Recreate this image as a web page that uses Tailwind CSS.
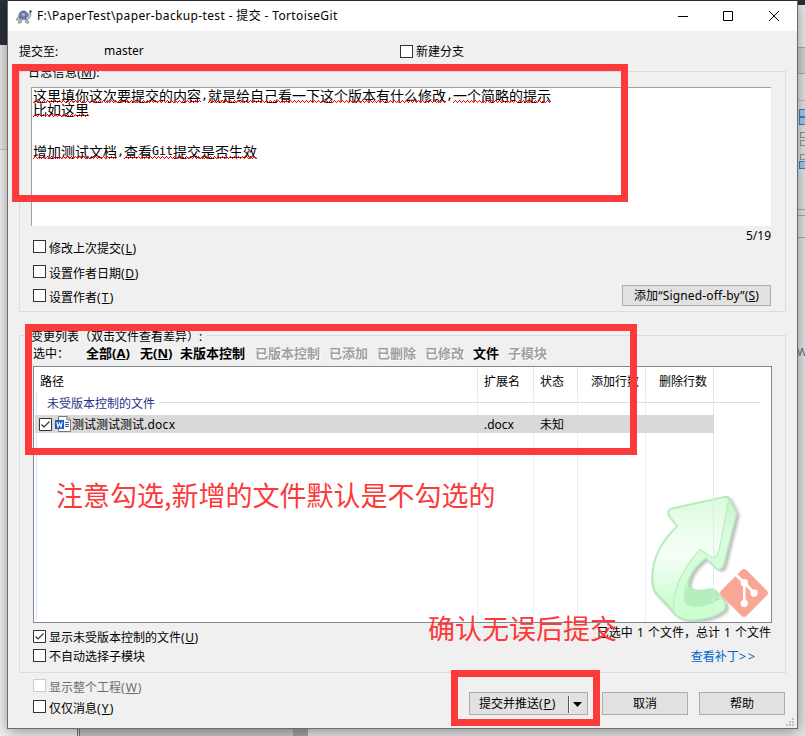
<!DOCTYPE html>
<html lang="zh-CN">
<head>
<meta charset="utf-8">
<title>TortoiseGit</title>
<script src="https://cdn.jsdelivr.net/npm/@tailwindcss/browser@4"></script>
</head>
<body class="relative h-[736px] w-[805px] overflow-hidden bg-[#e9e9e9] font-['Noto_Sans','Noto_Sans_CJK_SC',sans-serif] text-[12px] leading-[16px] text-black whitespace-nowrap">

<!-- spelling underline pattern -->
<svg class="absolute size-0"><defs><pattern id="wave" width="4" height="3" patternUnits="userSpaceOnUse"><path d="M0 2h1v1h-1zM1 1h1v1h-1zM2 0h1v1h-1zM3 1h1v1h-1z" fill="#f00"/></pattern></defs></svg>

<!-- desktop behind the dialog -->
<div class="absolute inset-0">
  <div class="absolute left-0 top-0 h-[45px] w-[10px] bg-[#2b303b]"></div>
  <div class="absolute left-0 top-[149px] h-px w-[8px] bg-[#c4c4c4]"></div>
  <div class="absolute left-0 top-[150px] h-[586px] w-[77px] bg-[#f3f3f3]"></div>
  <div class="absolute left-[77px] top-[728px] flex h-[8px] w-[231px] bg-[#c9c9c9]"><i class="w-[3px] border-x border-[#777] bg-[#ddd]"></i><i class="ml-auto w-[15px] bg-[#a8a8a8]"></i></div>
  <div class="absolute left-[797px] top-0 h-[736px] w-[8px] bg-[#e6e6e6]">
    <div class="h-[5px] bg-[#2b303b]"></div>
    <div class="h-[43px] border-b border-[#aaa] bg-[#ececec]"></div>
    <div class="h-[26px] border-b border-[#aaa] bg-[#d4d4d4]"></div>
    <div class="h-[27px] border-b border-[#bbb]"></div>
    <div class="mt-[8px] ml-[2px] h-[8px] border border-r-0 border-[#2f86d0] bg-[#a5cdec]"></div>
    <div class="ml-[2px] h-[8px] border border-r-0 border-[#2f86d0] bg-[#a5cdec]"></div>
    <div class="mt-[7px] ml-[3px] h-[6px] border border-r-0 border-[#999]"></div>
    <div class="mt-[2px] ml-[3px] h-[6px] border border-r-0 border-[#999]"></div>
    <div class="mt-[8px] ml-[3px] h-[6px] border border-r-0 border-[#999]"></div>
    <div class="mt-px ml-[2px] h-[8px] border border-r-0 border-[#2f86d0] bg-[#a5cdec]"></div>
    <div class="mt-[40px] h-[7px] border-y border-[#aaa]"></div>
    <div class="h-[22px] border-b border-[#aaa]"></div>
    <div class="mt-[106px] text-[11px] text-[#57709a]">W</div>
  </div>
</div>

<!-- commit dialog -->
<main class="relative ml-[7px] flex h-[729px] w-[791px] flex-col border border-[#6b6b6b] border-t-[#2b2b33] bg-[#f0f0f0] shadow-[0_3px_14px_rgba(0,0,0,0.4)]">
  <header class="flex h-[30px] items-center bg-white pl-[8px]">
    <svg class="h-[15px] w-[17px]" viewBox="0 0 17 15">
      <path d="M2 8L0 11L3 11M4 10L2 14H5L6 11M9 10L10 14H13L11 10" fill="#b9bec5" stroke="#777" stroke-width=".7"/>
      <path d="M3 9Q2 3 7 2Q12 2 12 8Q9 12 3 9Z" fill="#7890c0" stroke="#56617b"/>
      <path d="M5 5L7 3L10 5L9 8H6ZM3 8L6 8M9 8L12 8" fill="#9db1d8" stroke="#425a94" stroke-width=".8"/>
      <path d="M10 9Q13 7 13 4Q15 3 15 5Q15 9 11 11Z" fill="#c5c9cd" stroke="#777" stroke-width=".6"/>
      <path d="M13 2L15 1L16 3L14 4Z" fill="#245b6b"/>
    </svg>
    <h1 class="ml-[4px] text-[12px] tracking-[0.36px]">F:\PaperTest\paper-backup-test - 提交 - TortoiseGit</h1>
    <svg class="ml-auto mr-[17px] h-[12px] w-[102px]" viewBox="0 0 102 12" fill="none" stroke="#000">
      <path d="M0 6.5H10M45.5 1.5H54.5V10.5H45.5ZM91 1L101 11M101 1L91 11"/>
    </svg>
  </header>

  <div class="flex h-[40px] items-center pl-[11px]">
    <span class="w-[85px] pt-px">提交至:</span><span class="w-[296px]">master</span>
    <label class="flex items-center gap-[3px]"><i class="size-[13px] border border-[#333] bg-white"></i><span class="pt-px">新建分支</span></label>
  </div>

  <section class="relative ml-[11px] h-[241px] w-[767px] border border-[#dcdcdc] px-[11px] pt-[15px]">
    <div class="absolute left-[6px] top-[-7px] bg-[#f0f0f0] px-[2px] tracking-[0.3px]">日志信息(<u>M</u>):</div>
    <div class="h-[139px] w-[740px] border-l border-t border-[#a0a0a0] bg-white pl-[1px] font-['DejaVu_Sans_Mono','Noto_Sans_CJK_SC',monospace] text-[14px] leading-[15px]">
      <p class="flex h-[14px]"><span class="relative font-['Noto_Sans_CJK_SC']">这里填你这次要提交的内容<svg class="absolute left-0 top-[12px] h-[3px] w-full"><rect width="100%" height="3" fill="url(#wave)"/></svg></span><span class="text-[11.63px]">,</span><span class="relative font-['Noto_Sans_CJK_SC']">就是给自己看一下这个版本有什么修改<svg class="absolute left-0 top-[12px] h-[3px] w-full"><rect width="100%" height="3" fill="url(#wave)"/></svg></span><span class="text-[11.63px]">,</span><span class="relative font-['Noto_Sans_CJK_SC']">一个简略的提示<svg class="absolute left-0 top-[12px] h-[3px] w-full"><rect width="100%" height="3" fill="url(#wave)"/></svg></span></p>
      <p class="flex h-[42px]"><span class="relative font-['Noto_Sans_CJK_SC']">比如这里<svg class="absolute left-0 top-[12px] h-[3px] w-full"><rect width="100%" height="3" fill="url(#wave)"/></svg></span></p>
      <p class="flex h-[14px]"><span class="relative font-['Noto_Sans_CJK_SC']">增加测试文档<svg class="absolute left-0 top-[12px] h-[3px] w-full"><rect width="100%" height="3" fill="url(#wave)"/></svg></span><span class="text-[11.63px]">,</span><span class="relative flex"><span class="font-['Noto_Sans_CJK_SC']">查看</span><span class="text-[11.63px]">Git</span><span class="font-['Noto_Sans_CJK_SC']">提交是否生效</span><svg class="absolute left-0 top-[12px] h-[3px] w-full"><rect width="100%" height="3" fill="url(#wave)"/></svg></span></p>
    </div>
    <div class="flex w-[740px] justify-between">
      <div class="pl-[2px] pt-[12px]">
        <label class="flex h-[25px] items-start gap-[3px]"><i class="mt-[2px] size-[13px] border border-[#333] bg-white"></i><span class="mt-[3px]">修改上次提交<span class="tracking-[0.8px]">(<u>L</u>)</span></span></label>
        <label class="flex h-[24px] items-start gap-[3px]"><i class="mt-[2px] size-[13px] border border-[#333] bg-white"></i><span class="mt-[3px]">设置作者日期<span class="tracking-[0.7px]">(<u>D</u>)</span></span></label>
        <label class="flex h-[24px] items-start gap-[3px]"><i class="mt-[2px] size-[13px] border border-[#333] bg-white"></i><span class="mt-[3px]">设置作者<span class="tracking-[1.2px]">(<u>T</u>)</span></span></label>
      </div>
      <div class="flex flex-col items-end pt-[2px]">
        <span>5/19</span>
        <button class="mt-[41px] h-[21px] w-[149px] border border-[#adadad] bg-[#e1e1e1] leading-[18px] tracking-[0.15px]">添加“Signed-off-by”(<u>S</u>)</button>
      </div>
    </div>
  </section>

  <section class="relative ml-[11px] mt-[23px] h-[338px] w-[767px] border border-[#dcdcdc] pl-[13px] pt-[9px]">
    <div class="absolute left-[11px] top-[-7px] bg-[#f0f0f0] pr-[5px]">变更列表（双击文件查看差异）:</div>
    <div class="flex h-[21px] text-[13px] font-bold leading-[17px]">
      <span class="w-[53px] text-[12px] font-normal">选中：</span>
      <span class="w-[54px]">全部(<u>A</u>)</span><span class="w-[40px]">无(<u>N</u>)</span><span class="w-[75px]">未版本控制</span>
      <span class="w-[74px] text-[#a0a0a0] [text-shadow:1px_1px_#fff]">已版本控制</span><span class="w-[48px] text-[#a0a0a0] [text-shadow:1px_1px_#fff]">已添加</span><span class="w-[48px] text-[#a0a0a0] [text-shadow:1px_1px_#fff]">已删除</span><span class="w-[48px] text-[#a0a0a0] [text-shadow:1px_1px_#fff]">已修改</span>
      <span class="w-[35px]">文件</span><span class="text-[#a0a0a0] [text-shadow:1px_1px_#fff]">子模块</span>
    </div>
    <div class="relative h-[257px] w-[739px] border border-[#828790] bg-white">
      <div class="absolute bottom-[2px] left-[2px] top-[25px] w-px bg-[#cce4ff]"></div>
      <svg class="absolute left-[612px] top-[124px] h-[131px] w-[126px]" viewBox="18 15 378 393">
        <defs>
          <linearGradient id="arrowBody" x1="0" y1="0" x2="0" y2="1"><stop offset="0" stop-color="#dcfbde"/><stop offset=".5" stop-color="#f6fff7"/><stop offset=".72" stop-color="#e2fde4"/><stop offset="1" stop-color="#c6ffca"/></linearGradient>
          <linearGradient id="arrowSide" x1="0" y1="0" x2="0" y2="1"><stop offset="0" stop-color="#c4f5c9"/><stop offset=".3" stop-color="#dcfbdf"/><stop offset="1" stop-color="#cbffcf"/></linearGradient>
          <filter id="soft"><feGaussianBlur stdDeviation="4"/></filter>
        </defs>
        <path d="M86 72Q81 82 89 93L111 120Q38 190 36 273Q35 300 45 320L105 386Q125 403 155 403Q215 402 252 374Q260 365 254 345L224 313Q212 306 196 312Q160 318 145 302Q146 255 198 217L229 248Q242 256 251 239L290 82L269 38Q264 29 250 33L96 67Z" fill="#777" opacity=".5" filter="url(#soft)" transform="translate(9 6)"/>
        <path d="M86 72Q81 82 89 93L111 120Q38 190 36 273Q35 300 45 320L105 386Q125 403 155 403Q215 402 252 374Q260 365 254 345L224 313Q212 306 196 312Q160 318 145 302Q146 255 198 217L229 248Q242 256 251 239L290 82L269 38Q264 29 250 33L96 67Z" fill="url(#arrowSide)" stroke="#b7e6be" stroke-width="5"/>
        <path d="M88 73Q83 82 91 93L113 121Q40 190 38 273Q38 298 48 318L102 375Q92 290 180 190L218 216Q232 215 240 180L266 40Q260 33 250 35L96 69Z" fill="url(#arrowBody)" stroke="#bceec2" stroke-width="4"/>
        <path d="M145 302Q160 318 196 312Q212 306 224 313L240 338Q205 359 170 360Q135 360 133 343Q134 320 145 302Z" fill="#b4efbb"/>
        <path d="M198 217Q140 260 132 325Q128 361 168 361Q205 360 240 338" fill="none" stroke="#b5e8bb" stroke-width="3"/>
        <path d="M304 253Q312 245 320 253L381 314Q387 321 381 328L320 389Q312 396 304 389L243 328Q237 321 243 314Z" fill="#f8a797"/>
        <path d="M288 267L313 290V350M313 290L342 321" fill="none" stroke="#fff" stroke-width="8"/>
        <circle cx="313" cy="290" r="11" fill="#fff"/><circle cx="342" cy="321" r="11" fill="#fff"/><circle cx="313" cy="352" r="11" fill="#fff"/>
      </svg>
      <div class="absolute inset-y-0 left-0 grid grid-cols-[444px_56px_44px_68px_68px]"><i class="border-r border-[#e0edf9]/80"></i><i class="border-r border-[#e0edf9]/80"></i><i class="border-r border-[#e0edf9]/80"></i><i class="border-r border-[#e0edf9]/80"></i><i class="border-r border-[#d4e8ef]/80"></i></div>
      <div class="relative grid h-[25px] grid-cols-[444px_56px_44px_68px_68px] leading-[29px]">
        <span class="border-r border-[#e5e5e5] pl-[6px]">路径</span><span class="border-r border-[#e5e5e5] pl-[6px]">扩展名</span><span class="border-r border-[#e5e5e5] pl-[6px]">状态</span><span class="border-r border-[#e5e5e5] pr-[6px] text-right">添加行数</span><span class="border-r border-[#e5e5e5] pr-[6px] text-right">删除行数</span>
      </div>
      <div class="relative flex h-[23px] items-center pl-[13px] pr-[11px] text-[#1e3287]">未受版本控制的文件<i class="ml-[4px] -mt-[2px] h-px flex-1 bg-[#d4deee]"></i></div>
      <div class="relative ml-px grid h-[18px] w-[679px] grid-cols-[443px_56px_112px_68px] items-center bg-[#d9d9d9]">
        <span class="flex items-center pl-[4px]">
          <svg class="size-[13px]" viewBox="0 0 13 13"><path d="M.5.5H12.5V12.5H.5Z" fill="#fff" stroke="#333"/><path d="M2.5 6.5L5 9L10.5 3.5" fill="none" stroke="#333" stroke-width="1.2"/></svg>
          <svg class="ml-[3px] h-[16px] w-[16px]" viewBox="0 0 16 16"><path d="M3.500.5H12L15.500 4V15.500H3.500Z" fill="#fff" stroke="#777"/><path d="M12 .5V4H15.500" fill="none" stroke="#777"/><path d="M10 6.500H14M10 8.500H14M10 10.500H14" stroke="#2b63c1"/><path d="M0 4H9V13H0Z" fill="#1b5dbe"/><path d="M1.800 6L3 11L4.500 7L6 11L7.200 6" fill="none" stroke="#fff" stroke-width="1.100"/></svg>
          <span class="ml-[1px] mt-[1px]">测试测试测试<span class="tracking-[0.25px]">.docx</span></span>
        </span>
        <span class="pl-[6px] pt-px">.docx</span><span class="pl-[6px] pt-px">未知</span>
      </div>
    </div>
    <div class="flex w-[739px] justify-between">
      <div class="pt-[6px]">
        <label class="flex h-[19px] items-start gap-[3px]"><svg class="mt-px size-[13px]" viewBox="0 0 13 13"><path d="M.5.5H12.5V12.5H.5Z" fill="#fff" stroke="#333"/><path d="M2.5 6.5L5 9L10.5 3.5" fill="none" stroke="#333" stroke-width="1.2"/></svg><span class="mt-px">显示未受版本控制的文件<span class="tracking-[0.6px]">(<u>U</u>)</span></span></label>
        <label class="flex h-[19px] items-start gap-[3px]"><i class="mt-px size-[13px] border border-[#333] bg-white"></i><span class="mt-px">不自动选择子模块</span></label>
      </div>
      <div class="flex flex-col items-end pt-[2px]"><span class="mr-px [word-spacing:1px]">已选中 1 个文件，总计 1 个文件</span><a class="mr-[15px] mt-[7px] text-[#0066cc]">查看补丁<span class="text-[13px] tracking-[1.7px]">&gt;&gt;</span></a></div>
    </div>
  </section>

  <footer class="flex flex-1 pl-[25px]">
    <div class="w-[436px] pt-[6px]">
      <label class="flex h-[21px] items-start gap-[3px] text-[#6d6d6d]"><i class="size-[13px] border border-[#ccc] bg-white"></i><span class="mt-px">显示整个工程<span class="tracking-[1px]">(<u>W</u>)</span></span></label>
      <label class="flex h-[20px] items-start gap-[3px]"><i class="size-[13px] border border-[#333] bg-white"></i><span class="mt-px">仅仅消息<span class="tracking-[1.2px]">(<u>Y</u>)</span></span></label>
    </div>
    <div class="flex pt-[19px]">
      <button class="flex h-[23px] w-[119px] items-center border border-[#adadad] bg-[#e1e1e1] pl-[9px] pt-px">提交并推送<span class="tracking-[0.9px]">(<u>P</u>)</span><i class="ml-auto h-[17px] w-[2px] border-l border-r border-l-[#555] border-r-white"></i><svg class="ml-[3px] mr-[5px] h-[5px] w-[9px]" viewBox="0 0 9 5"><path d="M0 0H9L4.500 5Z"/></svg></button>
      <button class="ml-[14px] h-[23px] w-[86px] border border-[#adadad] bg-[#e1e1e1] pt-px">取消</button>
      <button class="ml-[11px] h-[23px] w-[86px] border border-[#adadad] bg-[#e1e1e1] pt-px">帮助</button>
    </div>
  </footer>
  <svg class="absolute bottom-[2px] right-[3px] size-[8px] fill-[#bfbfbf]" viewBox="0 0 8 8"><path d="M6 0H8V2H6ZM3 3H5V5H3ZM6 3H8V5H6ZM0 6H2V8H0ZM3 6H5V8H3ZM6 6H8V8H6Z"/></svg>
</main>

<!-- red annotations -->
<div class="absolute left-[12px] top-[64px] h-[138px] w-[616px] border-[7px] border-[#fc3a3a]"></div>
<div class="absolute left-[25px] top-[324px] h-[131px] w-[612px] border-[7px] border-[#fc3a3a]"></div>
<div class="absolute left-[451px] top-[670px] h-[56px] w-[149px] border-[7px] border-[#fc3a3a]"></div>
<div class="absolute left-[56px] top-[475px] font-['Noto_Sans_CJK_SC',sans-serif] text-[27px] leading-[40px] text-[#fc3a3a]">注意勾选,新增的文件默认是不勾选的</div>
<div class="absolute left-[428px] top-[608px] font-['Noto_Sans_CJK_SC',sans-serif] text-[27px] leading-[40px] text-[#fc3a3a]">确认无误后提交</div>
</body>
</html>
